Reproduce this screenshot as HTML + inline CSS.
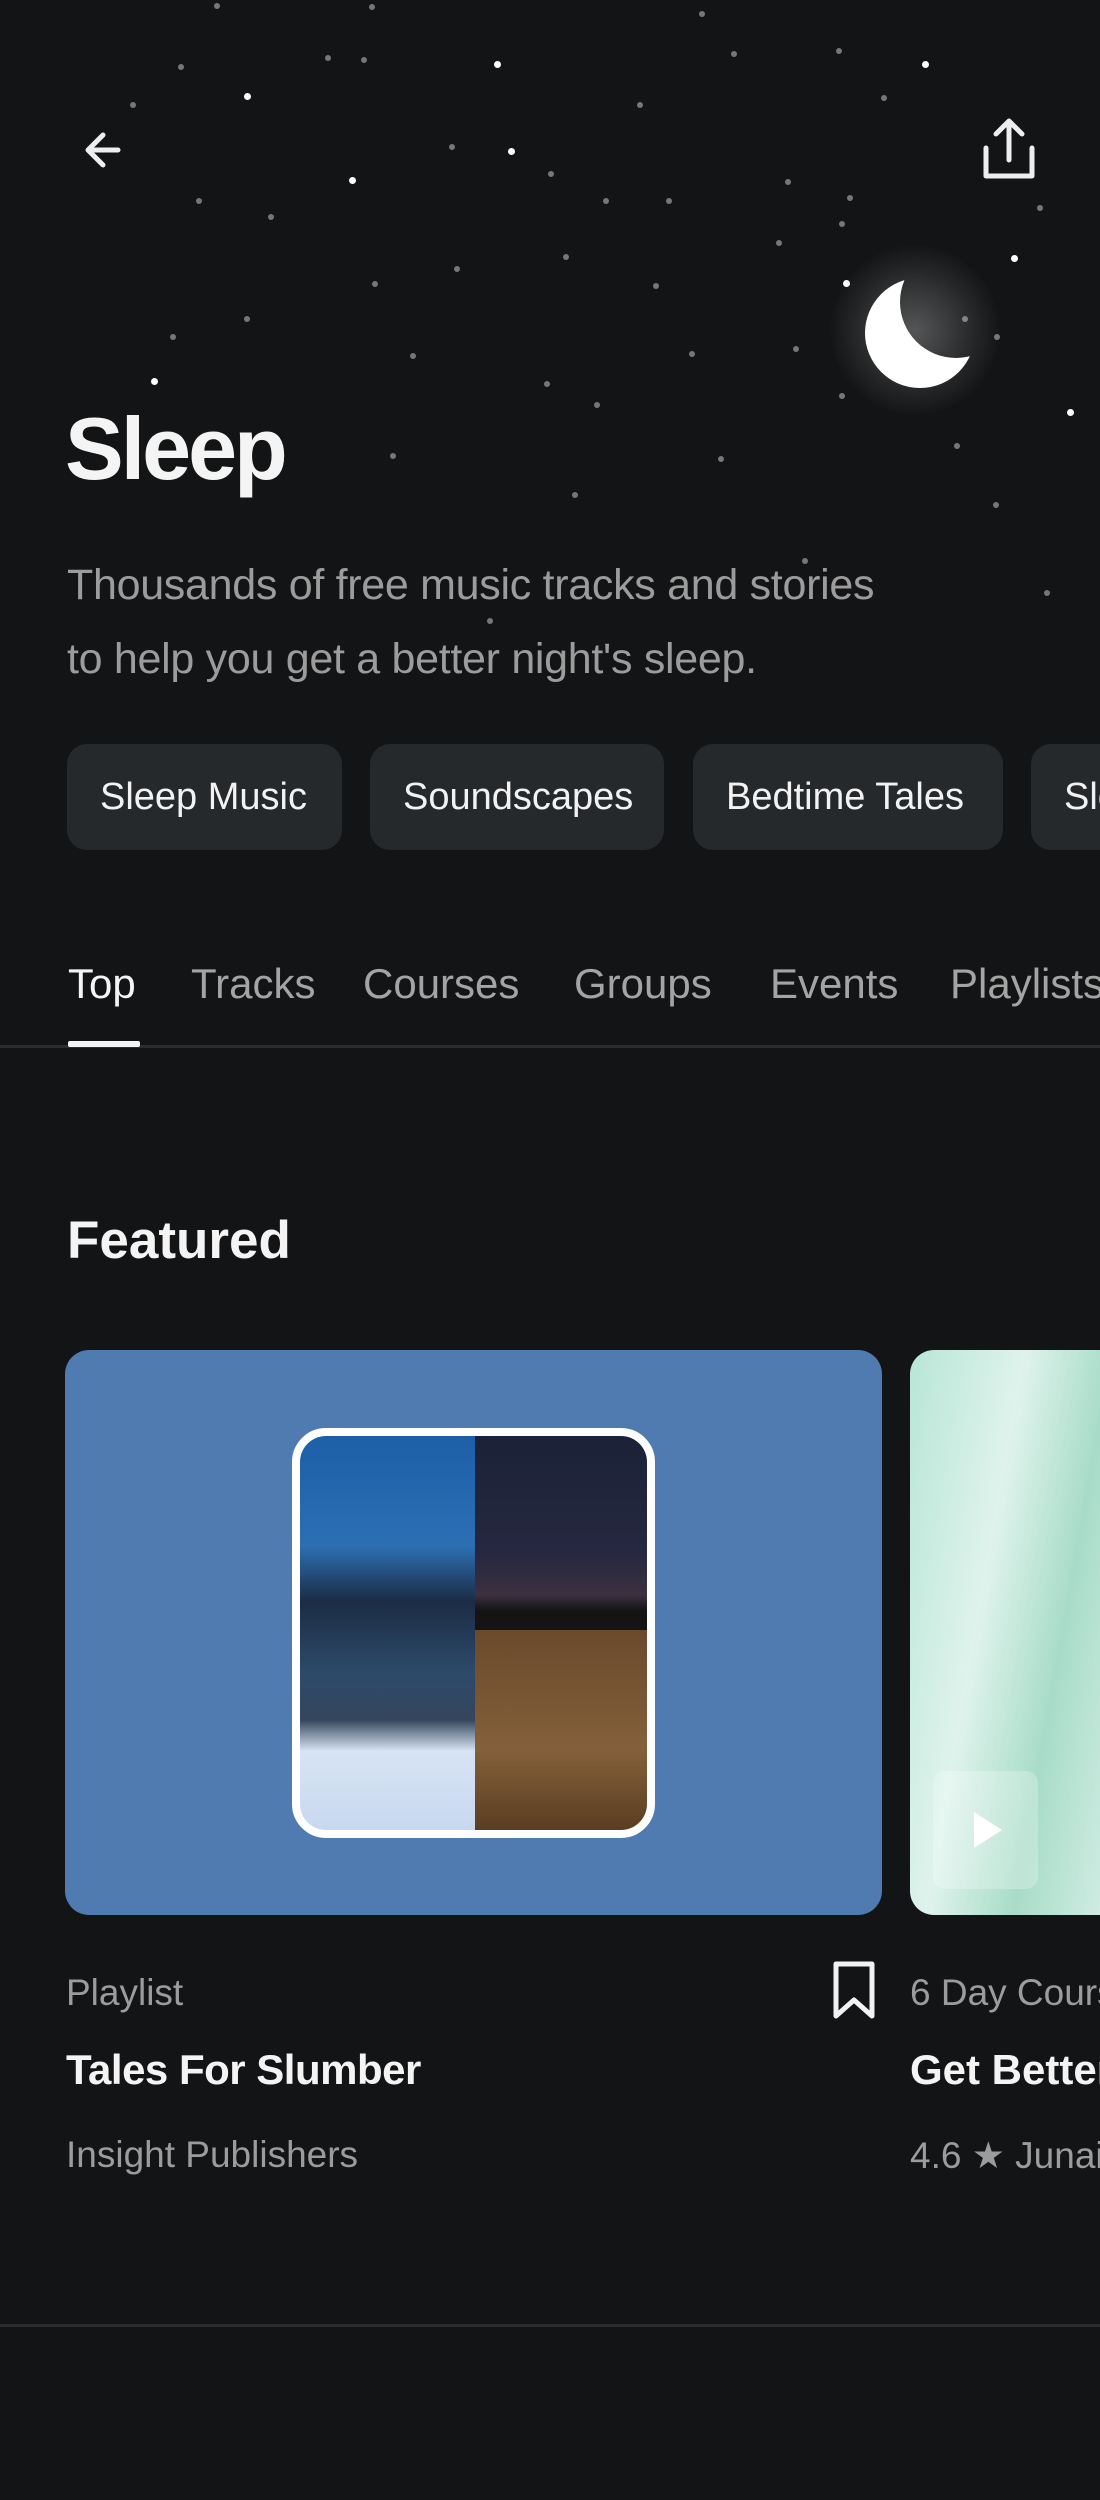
<!DOCTYPE html>
<html><head><meta charset="utf-8"><style>
*{margin:0;padding:0;box-sizing:border-box}
html,body{width:1100px;height:2500px;overflow:hidden}
body{background:#131415;font-family:"Liberation Sans",sans-serif;position:relative;color:#fff}
.a{position:absolute;white-space:nowrap}
.s{position:absolute;border-radius:50%;background:#bbb}
.chip{position:absolute;top:744px;height:106px;background:#26292c;border-radius:20px;font-size:38px;color:#f2f2f2;line-height:106px;padding-left:33px;overflow:hidden}
.tab{position:absolute;top:960px;font-size:42px;color:#a4a4a4}
</style></head><body>
<div id="stars"></div>
<div class="a" style="left:830px;top:245px;width:170px;height:170px;border-radius:50%;background:radial-gradient(circle,rgba(255,255,255,.28),rgba(255,255,255,.08) 50%,rgba(255,255,255,0) 72%)"></div>
<svg class="a" style="left:0;top:0" width="1100" height="700">
<defs><mask id="m"><rect width="1100" height="700" fill="#fff"/><circle cx="956" cy="302" r="56" fill="#000"/></mask></defs>
<circle cx="920" cy="333" r="55" fill="#fff" mask="url(#m)"/>
<path d="M88 150H118M88 150L103 135M88 150L103 165" stroke="#eee" stroke-width="5" fill="none" stroke-linecap="round" stroke-linejoin="round"/>
<path d="M1009 122V160M996 134L1009 121L1022 134M986 148V176H1032V148" stroke="#eee" stroke-width="5" fill="none" stroke-linecap="round" stroke-linejoin="round"/>
</svg>
<div class="a" style="left:65px;top:398px;font-size:88px;font-weight:bold;color:#f4f4f4;letter-spacing:-3px">Sleep</div>
<div class="a" style="left:67px;top:548px;font-size:43px;line-height:74px;color:#9c9c9c;letter-spacing:-0.3px">Thousands of free music tracks and stories<br>to help you get a better night's sleep.</div>
<div class="chip" style="left:67px;width:275px">Sleep Music</div>
<div class="chip" style="left:370px;width:294px">Soundscapes</div>
<div class="chip" style="left:693px;width:310px">Bedtime Tales</div>
<div class="chip" style="left:1031px;width:69px;border-radius:20px 0 0 20px">Sleep</div>
<div class="tab" style="left:68px;color:#f4f4f4">Top</div>
<div class="tab" style="left:191px">Tracks</div>
<div class="tab" style="left:363px">Courses</div>
<div class="tab" style="left:574px">Groups</div>
<div class="tab" style="left:770px">Events</div>
<div class="tab" style="left:950px">Playlists</div>
<div class="a" style="left:0;top:1045px;width:1100px;height:3px;background:#2a2c2e"></div>
<div class="a" style="left:68px;top:1041px;width:72px;height:6px;background:#f4f4f4;border-radius:2px"></div>
<div class="a" style="left:67px;top:1210px;font-size:53px;font-weight:bold;color:#f4f4f4">Featured</div>
<div class="a" style="left:65px;top:1350px;width:817px;height:565px;background:#4f7bb0;border-radius:24px"></div>
<div class="a" style="left:292px;top:1428px;width:363px;height:410px;border:8px solid #fff;border-radius:34px;overflow:hidden;background:#fff">
 <div class="a" style="left:0;top:0;width:175px;height:394px;background:linear-gradient(#1d5fa8 0%,#2c6fb3 28%,#1b2c44 42%,#2d4a6a 60%,#34465c 72%,#d8e4f4 80%,#c8d8f0 100%)"></div>
 <div class="a" style="left:175px;top:0;width:172px;height:194px;background:linear-gradient(#1b2238,#252840 60%,#3b3040 82%,#141414 90%)"></div>
 <div class="a" style="left:175px;top:194px;width:172px;height:200px;background:linear-gradient(#6a4a2c,#84603a 60%,#5a3e22)"></div>
</div>
<div class="a" style="left:910px;top:1350px;width:190px;height:565px;border-radius:24px 0 0 24px;background:linear-gradient(100deg,#b8e6d6,#dff3ec 40%,#a8dcc8 70%,#cfece2)"></div>
<div class="a" style="left:933px;top:1771px;width:105px;height:118px;border-radius:12px;background:rgba(255,255,255,.25)"></div>
<svg class="a" style="left:970px;top:1810px" width="40" height="44"><path d="M4 2L32 20L4 38Z" fill="#fff"/></svg>
<div class="a" style="left:66px;top:1972px;font-size:37px;color:#9c9c9c">Playlist</div>
<div class="a" style="left:66px;top:2046px;font-size:42px;font-weight:bold;color:#f4f4f4;letter-spacing:-0.5px">Tales For Slumber</div>
<div class="a" style="left:66px;top:2134px;font-size:37px;color:#9c9c9c">Insight Publishers</div>
<svg class="a" style="left:830px;top:1960px" width="50" height="62"><path d="M6 4H42V56L24 40L6 56Z" fill="none" stroke="#f2f2f2" stroke-width="5" stroke-linejoin="round"/></svg>
<div class="a" style="left:910px;top:1972px;width:190px;overflow:hidden;font-size:37px;color:#9c9c9c">6 Day Course</div>
<div class="a" style="left:910px;top:2046px;width:190px;overflow:hidden;font-size:42px;font-weight:bold;color:#f4f4f4">Get Better</div>
<div class="a" style="left:910px;top:2134px;width:190px;overflow:hidden;font-size:37px;color:#9c9c9c">4.6 ★ Junaid</div>
<div class="a" style="left:0;top:2324px;width:1100px;height:3px;background:#2a2c2e"></div>
<script>
var p=[[258,95],[467,83],[519,86],[709,92,1],[1046,77],[1196,73],[1320,92,1],[353,137,1],[913,150],[502,258,1],[785,248],[283,287],[645,209],[729,216,1],[1123,259],[1212,282],[1482,297],[387,310],[954,287],[864,287],[1110,347],[1200,320],[1446,368,1],[652,383],[807,366],[535,405],[935,408],[1207,404,1],[1375,455],[1421,480],[247,480],[352,455],[589,507],[986,505],[1134,498],[220,544,1],[780,547],[851,577],[1526,588,1],[1364,636],[1028,655],[560,650],[819,705],[1420,720],[1148,800],[699,885],[1493,845],[1200,565],[190,150],[1260,140],[1000,20],[310,8],[530,10]];
var h='';p.forEach(function(q){var x=q[0]/1.4255,y=q[1]/1.4255,r=q[2]?3.5:3;h+='<div class="s" style="left:'+(x-r)+'px;top:'+(y-r)+'px;width:'+2*r+'px;height:'+2*r+'px;background:'+(q[2]?'#fff':'#777')+'"></div>'});
document.getElementById('stars').innerHTML=h;
</script>
</body></html>
